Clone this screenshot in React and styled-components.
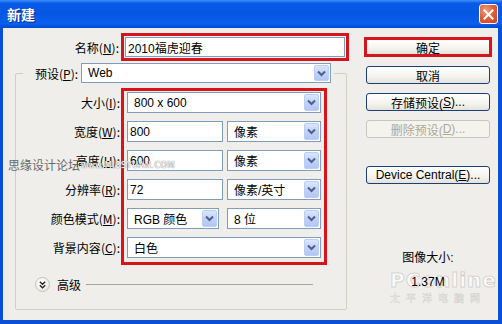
import React from 'react';
import styled, { createGlobalStyle } from 'styled-components';

const GlobalStyle = createGlobalStyle`
    html, body {
        margin: 0;
        padding: 0;
        background: #fff;
    }
    body {
        font-family: "Liberation Sans", "Noto Sans CJK SC", sans-serif;
        font-size: 12px;
        color: #000;
    }
    * {
        box-sizing: border-box;
    }
`

const Window = styled.div`
    position: relative;
    width: 502px;
    height: 324px;
    display: flex;
    flex-direction: column;
    background: #0b4fd6;
    overflow: hidden;
`

const TitleBar = styled.div`
    height: 28px;
    flex-shrink: 0;
    display: flex;
    align-items: center;
    justify-content: space-between;
    padding: 0 4px 0 7px;
    background: linear-gradient(to bottom, #3c8ff8 0%, #0a5ae8 12%, #0656e4 50%, #0a60ee 85%, #0448d0 100%);
`

const Title = styled.span`
    color: #fff;
    font-family: "Noto Sans CJK SC", sans-serif;
    font-size: 14px;
    font-weight: bold;
    letter-spacing: 0;
    text-shadow: 1px 1px 0 #0a2a80;
`

const CloseButton = styled.div`
    width: 19px;
    height: 20px;
    border: 1px solid #fff;
    border-radius: 3px;
    background: radial-gradient(circle at 35% 30%, #f3a07d 0%, #e2613a 45%, #c8401c 100%);
    display: flex;
    align-items: center;
    justify-content: center;
`

const Body = styled.div`
    flex: 1;
    margin: 0 4px 4px 3px;
    background: #efeeea;
    display: flex;
    padding-top: 5px;
`

const LeftPane = styled.div`
    width: 348px;
    display: flex;
    flex-direction: column;
`

const NameRow = styled.div`
    display: flex;
    align-items: center;
`

const Label = styled.label`
    width: ${p => p.$width || 105}px;
    height: 21px;
    line-height: 21px;
    text-align: right;
    white-space: nowrap;
    padding-right: ${p => p.$pad || 0}px;
    font-family: "Noto Sans CJK SC", sans-serif;
    font-size: 12px;
`

const RedFrame = styled.div`
    border: 3px solid #d5141c;
    padding: ${p => p.$padding || '1px'};
    margin-left: ${p => p.$offset || 0}px;
    display: flex;
    flex-direction: column;
    gap: 8px;
`

const TextInput = styled.div`
    width: ${p => p.$width}px;
    height: ${p => p.$height || 21}px;
    border: 1px solid #7f9db9;
    background: #fff;
    padding-left: 2px;
    display: flex;
    align-items: center;
    white-space: nowrap;
`

const Group = styled.fieldset`
    margin: 2px 0 0 12px;
    width: 332px;
    padding: 0 0 17px 0;
    border: 1px solid #d0d0bf;
    border-radius: 2px;
    min-width: 0;
`

const Legend = styled.legend`
    margin-left: 7px;
    padding: 0 3px 0 2px;
    height: 20px;
    display: flex;
    align-items: center;
    gap: 3px;
`

const LegendLabel = styled.span`
    padding-left: 10px;
    font-family: "Noto Sans CJK SC", sans-serif;
    white-space: nowrap;
`

const Fields = styled.div`
    display: flex;
    margin-top: 5px;
`

const LabelColumn = styled.div`
    display: flex;
    flex-direction: column;
    gap: 8px;
    padding-top: 4px;
`

const FieldRow = styled.div`
    display: flex;
    gap: ${p => p.$gap || 4}px;
`

const Combo = styled.div`
    width: ${p => p.$width}px;
    height: ${p => p.$height || 21}px;
    border: 1px solid #7f9db9;
    background: #fff;
    display: flex;
    align-items: center;
    justify-content: space-between;
    padding: 1px 1px 1px ${p => p.$indent || 6}px;
    white-space: nowrap;
`

const ComboArrow = styled.div`
    width: 15px;
    height: 100%;
    border: 1px solid #b9cdf6;
    border-radius: 2px;
    background: linear-gradient(to bottom, #dbe6fe 0%, #c3d4fb 45%, #b2c6f6 100%);
    display: flex;
    align-items: center;
    justify-content: center;
`

const AdvancedRow = styled.div`
    display: flex;
    align-items: center;
    height: 15px;
    margin-top: 12px;
    padding-left: 19px;
`

const RoundToggle = styled.div`
    width: 15px;
    height: 15px;
    border-radius: 50%;
    border: 1px solid #c4c4be;
    background: radial-gradient(circle at 40% 35%, #ffffff 0%, #f0efea 60%, #d4d3cc 100%);
    display: flex;
    align-items: center;
    justify-content: center;
`

const AdvancedText = styled.span`
    margin-left: 7px;
    font-family: "Noto Sans CJK SC", sans-serif;
`

const Rule = styled.div`
    flex: 1;
    height: 1px;
    background: #a5a49c;
    margin: 0 33px 0 5px;
`

const RightPane = styled.div`
    width: 128px;
    margin-left: 13px;
    padding-top: 4px;
    display: flex;
    flex-direction: column;
    align-items: center;
`

const Button = styled.div`
    width: ${p => p.$primary ? 128 : 124}px;
    height: ${p => p.$primary ? 20 : 18}px;
    margin-top: ${p => p.$top || 0}px;
    border: ${p => p.$primary ? '3px solid #d5141c' : p.disabled ? '1px solid #c9c7ba' : '1px solid #1c3f78'};
    border-radius: ${p => p.$primary ? 0 : 3}px;
    background: ${p => p.disabled ? '#f4f3ee' : 'linear-gradient(to bottom, #ffffff 0%, #f4f3ee 60%, #e3e2da 100%)'};
    color: ${p => p.disabled ? '#aca899' : '#000'};
    display: flex;
    align-items: center;
    justify-content: center;
    white-space: nowrap;
    font-size: 12px;
`

const SizeInfo = styled.div`
    margin-top: ${p => p.$top}px;
    line-height: 14px;
    text-align: center;
    font-family: "Liberation Sans", "Noto Sans CJK SC", sans-serif;
    position: relative;
    z-index: 2;
`

const ForumMark = styled.div`
    position: absolute;
    left: 8px;
    top: 156px;
    display: flex;
    align-items: center;
    pointer-events: none;
`

const ForumName = styled.span`
    color: #6a6a6a;
    font-family: "Noto Sans CJK SC", sans-serif;
    font-size: 12px;
`

const ForumUrl = styled.span`
    color: #fff;
    font-family: "DejaVu Sans", sans-serif;
    font-size: 8px;
    letter-spacing: 0.6px;
    margin-left: 1px;
    margin-top: 2px;
    text-shadow: 0 0 1px #777, 0 0 1px #777;
`

const SiteMark = styled.div`
    position: absolute;
    left: 390px;
    top: 268px;
    width: 100px;
    pointer-events: none;
    z-index: 1;
`

const SiteLogo = styled.div`
    font-family: "DejaVu Sans", sans-serif;
    font-size: 20px;
    font-weight: bold;
    letter-spacing: 1px;
    color: rgba(255, 255, 255, 0.75);
    -webkit-text-stroke: 1px rgba(170, 170, 170, 0.45);
`

const SiteName = styled.div`
    margin-top: -2px;
    font-family: "Noto Sans CJK SC", sans-serif;
    font-size: 10px;
    letter-spacing: 6px;
    color: rgba(255, 255, 255, 0.8);
    -webkit-text-stroke: 0.5px rgba(170, 170, 170, 0.5);
`

const Chevron = () => (
    <svg width="9" height="7" viewBox="0 0 9 7">
        <path d="M1 1.5 L4.5 5 L8 1.5" fill="none" stroke="#4d6185" strokeWidth="2" />
    </svg>
)

const Dropdown = ({ width, height, indent, children }) => (
    <Combo $width={width} $height={height} $indent={indent}>
        <span>{children}</span>
        <ComboArrow><Chevron /></ComboArrow>
    </Combo>
)

const fieldLabels = [
    ['大小', 'I'],
    ['宽度', 'W'],
    ['高度', 'H'],
    ['分辨率', 'R'],
    ['颜色模式', 'M'],
    ['背景内容', 'C'],
]

function App() {
    return (
        <>
            <GlobalStyle />
            <Window>
                <TitleBar>
                    <Title>新建</Title>
                    <CloseButton>
                        <svg width="11" height="11" viewBox="0 0 11 11">
                            <path d="M1.5 1.5 L9.5 9.5 M9.5 1.5 L1.5 9.5" stroke="#fff" strokeWidth="2" strokeLinecap="square" />
                        </svg>
                    </CloseButton>
                </TitleBar>
                <Body>
                    <LeftPane>
                        <NameRow>
                            <Label $width={118} $pad={2}>名称(<u>N</u>):</Label>
                            <RedFrame>
                                <TextInput $width={220} $height={20}>2010福虎迎春</TextInput>
                            </RedFrame>
                        </NameRow>
                        <Group>
                            <Legend>
                                <LegendLabel>预设(<u>P</u>):</LegendLabel>
                                <Dropdown width={250} height={20} indent={6}>Web</Dropdown>
                            </Legend>
                            <Fields>
                                <LabelColumn>
                                    {fieldLabels.map(([text, key]) => (
                                        <Label key={key} $width={105} $pad={1}>{text}(<u>{key}</u>):</Label>
                                    ))}
                                </LabelColumn>
                                <RedFrame $padding="1px 3px 4px 3px">
                                    <Dropdown width={194}>800 x 600</Dropdown>
                                    <FieldRow>
                                        <TextInput $width={96}>800</TextInput>
                                        <Dropdown width={94}>像素</Dropdown>
                                    </FieldRow>
                                    <FieldRow>
                                        <TextInput $width={96}>600</TextInput>
                                        <Dropdown width={94}>像素</Dropdown>
                                    </FieldRow>
                                    <FieldRow>
                                        <TextInput $width={96}>72</TextInput>
                                        <Dropdown width={94}>像素/英寸</Dropdown>
                                    </FieldRow>
                                    <FieldRow $gap={8}>
                                        <Dropdown width={92}>RGB 颜色</Dropdown>
                                        <Dropdown width={94}>8 位</Dropdown>
                                    </FieldRow>
                                    <Dropdown width={194}>白色</Dropdown>
                                </RedFrame>
                            </Fields>
                            <AdvancedRow>
                                <RoundToggle>
                                    <svg width="7" height="8" viewBox="0 0 7 8">
                                        <path d="M0.8 0.8 L3.5 3.3 L6.2 0.8 M0.8 4.3 L3.5 6.8 L6.2 4.3" fill="none" stroke="#222" strokeWidth="1.3" />
                                    </svg>
                                </RoundToggle>
                                <AdvancedText>高级</AdvancedText>
                                <Rule />
                            </AdvancedRow>
                        </Group>
                    </LeftPane>
                    <RightPane>
                        <Button $primary>确定</Button>
                        <Button $top={9}>取消</Button>
                        <Button $top={9}>存储预设(<u>S</u>)...</Button>
                        <Button $top={9} disabled>删除预设(<u>D</u>)...</Button>
                        <Button $top={28}>Device Central(<u>E</u>)...</Button>
                        <SizeInfo $top={67}>图像大小:</SizeInfo>
                        <SizeInfo $top={10}>1.37M</SizeInfo>
                    </RightPane>
                </Body>
                <ForumMark>
                    <ForumName>思缘设计论坛</ForumName>
                    <ForumUrl>www.MISSYUAN.COM</ForumUrl>
                </ForumMark>
                <SiteMark>
                    <SiteLogo>PConline</SiteLogo>
                    <SiteName>太平洋电脑网</SiteName>
                </SiteMark>
            </Window>
        </>
    )
}

export default App;
